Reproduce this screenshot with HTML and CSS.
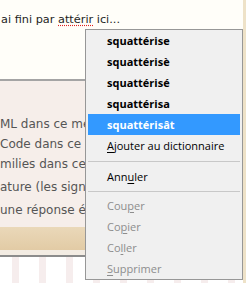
FILE: index.html
```html
<!DOCTYPE html>
<html>
<head>
   <meta charset="utf-8" />
   <title>Correction orthographique</title>
   <link rel="stylesheet" href="styles.css">
</head>
<body>
   <div class="page">
      <div class="editor">
         <p class="typed">ai fini par <span class="misspelled">attérir</span> ici...</p>
      </div>
      <div class="options">
         <p>ML dans ce message</p>
         <p>Code dans ce message</p>
         <p>milies dans ce message</p>
         <p class="spaced">ature (les signatures)</p>
         <p class="spaced">une réponse était postée</p>
      </div>
      <div class="bar"></div>
      <div class="gap"></div>
      <div class="rule"></div>
      <div class="stripes"></div>
   </div>

   <ul class="menu">
      <li class="suggest">squattérise</li>
      <li class="suggest">squattérisè</li>
      <li class="suggest">squattérisé</li>
      <li class="suggest">squattérisa</li>
      <li class="suggest active">squattérisât</li>
      <li><u>A</u>jouter au dictionnaire</li>
      <li class="sep"></li>
      <li>Ann<u>u</u>ler</li>
      <li class="sep short"></li>
      <li class="off">Cou<u>p</u>er</li>
      <li class="off">Co<u>p</u>ier</li>
      <li class="off">Co<u>l</u>ler</li>
      <li class="off"><u>S</u>upprimer</li>
   </ul>
</body>
</html>
```

FILE: styles.css
```css
body { margin: 0; width: 246px; height: 283px; overflow: hidden; background: #eee2c8; position: relative; }

.page { width: 243px; }

.editor { height: 79px; background: #fffef9; border-bottom: 2px solid #a4a4a4; font-family: "DejaVu Sans", sans-serif; font-size: 11.3px; color: #1e1e1e; }
.typed { margin: 0; padding: 13px 0 0 1px; white-space: nowrap; }
.misspelled { text-decoration: underline dotted #e02020; text-underline-offset: 2px; }

.options { height: 146px; background: #f6eeea; font-family: "DejaVu Sans", sans-serif; font-size: 12px; color: #555; overflow: hidden; }
.options p { margin: 0; height: 20px; line-height: 20px; white-space: nowrap; }
.options p:first-child { margin-top: 33px; }
.options p.spaced { margin-top: 3px; }

.bar { height: 23px; background: linear-gradient(#ead8b9, #e2cba5); }
.gap { height: 5px; background: #f3ece3; }
.rule { height: 2px; background: #8c8c8c; }
.stripes { height: 30px; background: repeating-linear-gradient(90deg, #ffffff 0 12px, #f6eded 12px 19px, #ffffff 19px 27px); }

.menu { position: absolute; left: 85px; top: 29px; width: 156px; margin: 0; padding: 0; list-style: none; background: #f0f0f0; border: 1px solid #979797; font-family: "Open Sans", sans-serif; font-size: 11px; color: #000; }
.menu li { height: 21px; line-height: 21px; padding-left: 19px; margin: 0 2px; white-space: nowrap; }
.menu .suggest { font-weight: bold; }
.menu .active { background: #3399ff; color: #fff; }
.menu .off { color: #8d8d8d; }
.menu .sep { height: 0; padding: 0; margin: 5px 2px 4px; border-top: 1px solid #c8c8c8; }
.menu .sep.short { margin: 4px 2px 3px; }
.menu u { text-underline-offset: 2px; }
```
